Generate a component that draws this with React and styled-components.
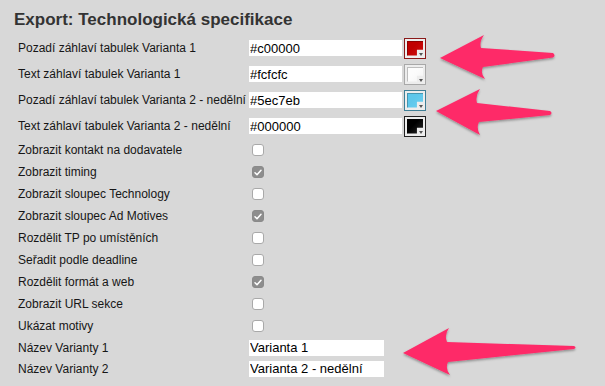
import React from 'react';
import styled, { createGlobalStyle } from 'styled-components';

const GlobalStyle = createGlobalStyle`
  body {
    margin: 0;
    background: #d8d8d8;
    font-family: "Liberation Sans", Arial, sans-serif;
  }
`;

const Page = styled.div`
  position: relative;
  width: 605px;
  height: 386px;
  overflow: hidden;
  background: #d8d8d8;
`;

const Title = styled.h2`
  margin: 0;
  padding: 10px 0 0 14px;
  height: 25px;
  font-size: 17px;
  line-height: 20px;
  font-weight: bold;
  color: #333;
`;

const Form = styled.div`
  display: flex;
  flex-direction: column;
`;

const Row = styled.div`
  display: flex;
  align-items: center;
  height: ${(p) => p.$h}px;
  padding-left: 18px;
`;

const Label = styled.div`
  width: 231px;
  font-size: 12px;
  color: #161616;
  white-space: nowrap;
`;

const Control = styled.div`
  display: flex;
  align-items: center;
  gap: 2px;
`;

const TextInput = styled.input`
  box-sizing: border-box;
  width: ${(p) => p.$w}px;
  height: 16px;
  margin: 0;
  padding: 0 0 0 1px;
  border: none;
  outline: none;
  background: #fff;
  font-family: "Liberation Sans", Arial, sans-serif;
  font-size: 13px;
  color: #000;
`;

const Swatch = styled.div`
  position: relative;
  box-sizing: border-box;
  width: 22px;
  height: 21px;
  border: 1px solid ${(p) => p.$edge};
  background: #ededed;
  padding: 2px;

  &::before {
    content: '';
    display: block;
    width: 100%;
    height: 100%;
    background: linear-gradient(135deg, ${(p) => p.$fill} 40%, ${(p) => p.$glow} 100%);
    box-shadow: inset 1px 1px 0 rgba(0, 0, 0, 0.25);
    clip-path: polygon(0 0, 100% 0, 100% 62%, 62% 62%, 62% 100%, 0 100%);
  }

  &::after {
    content: '';
    position: absolute;
    right: 2px;
    bottom: 2px;
    border-left: 2px solid transparent;
    border-right: 2px solid transparent;
    border-top: 3px solid #555;
  }
`;

const Check = styled.span`
  box-sizing: border-box;
  display: inline-flex;
  align-items: center;
  justify-content: center;
  width: 12px;
  height: 12px;
  margin-left: 3px;
  border-radius: 3px;
  border: 1px solid ${(p) => (p.$on ? '#8a8a8a' : '#a9a9a9')};
  background: ${(p) => (p.$on ? '#8d8d8d' : '#fff')};
`;

const Arrows = styled.svg`
  position: absolute;
  left: 0;
  top: 0;
  pointer-events: none;
`;

const colors = [
  { label: 'Pozadí záhlaví tabulek Varianta 1', value: '#c00000', fill: '#c00000', glow: '#d01010', edge: '#8a1a1a' },
  { label: 'Text záhlaví tabulek Varianta 1', value: '#fcfcfc', fill: '#fcfcfc', glow: '#f4f4f4', edge: '#a8a8a8' },
  { label: 'Pozadí záhlaví tabulek Varianta 2 - nedělní', value: '#5ec7eb', fill: '#5ec7eb', glow: '#6cd0f0', edge: '#3f7f96' },
  { label: 'Text záhlaví tabulek Varianta 2 - nedělní', value: '#000000', fill: '#000000', glow: '#2a2a2a', edge: '#222' },
];

const checks = [
  { label: 'Zobrazit kontakt na dodavatele', on: false },
  { label: 'Zobrazit timing', on: true },
  { label: 'Zobrazit sloupec Technology', on: false },
  { label: 'Zobrazit sloupec Ad Motives', on: true },
  { label: 'Rozdělit TP po umístěních', on: false },
  { label: 'Seřadit podle deadline', on: false },
  { label: 'Rozdělit formát a web', on: true },
  { label: 'Zobrazit URL sekce', on: false },
  { label: 'Ukázat motivy', on: false },
];

const names = [
  { label: 'Název Varianty 1', value: 'Varianta 1' },
  { label: 'Název Varianty 2', value: 'Varianta 2 - nedělní' },
];

const Tick = () => (
  <svg width="8" height="7" viewBox="0 0 8 7">
    <path d="M1 3.8 L3 5.8 L7 1.2" fill="none" stroke="#fff" strokeWidth="1.5" strokeLinecap="round" strokeLinejoin="round" />
  </svg>
);

const App = () => (
  <Page>
    <GlobalStyle />
    <Title>Export: Technologická specifikace</Title>
    <Form>
      {colors.map((c) => (
        <Row key={c.label} $h={26}>
          <Label>{c.label}</Label>
          <Control>
            <TextInput $w={153} defaultValue={c.value} />
            <Swatch $fill={c.fill} $glow={c.glow} $edge={c.edge} />
          </Control>
        </Row>
      ))}
      {checks.map((c) => (
        <Row key={c.label} $h={22}>
          <Label>{c.label}</Label>
          <Control>
            <Check $on={c.on}>{c.on && <Tick />}</Check>
          </Control>
        </Row>
      ))}
      {names.map((n) => (
        <Row key={n.label} $h={21}>
          <Label>{n.label}</Label>
          <Control>
            <TextInput $w={135} defaultValue={n.value} />
          </Control>
        </Row>
      ))}
    </Form>
    <Arrows width="605" height="386" viewBox="0 0 605 386">
      <defs>
        <filter id="shadow" x="-10%" y="-20%" width="120%" height="150%">
          <feDropShadow dx="0" dy="1.5" stdDeviation="1.2" floodColor="#000" floodOpacity="0.35" />
        </filter>
      </defs>
      <g fill="#fe2a68" filter="url(#shadow)">
        <path d="M440 58 L484 35 Q479 42 481 48 L553 53 Q556 55.5 553 57.5 L483 67 Q480 73 485 79 Z" />
        <path d="M436 111 L480 89 Q475 96 477 103 L550 111 Q553 113 550 115 L479 122 Q476 128 480 135 Z" />
        <path d="M403 353 L449 328 Q444 335 447 342 L574 346 Q577 347.5 574 349 L448 362 Q445 369 450 375 Z" />
      </g>
    </Arrows>
  </Page>
);

export default App;
